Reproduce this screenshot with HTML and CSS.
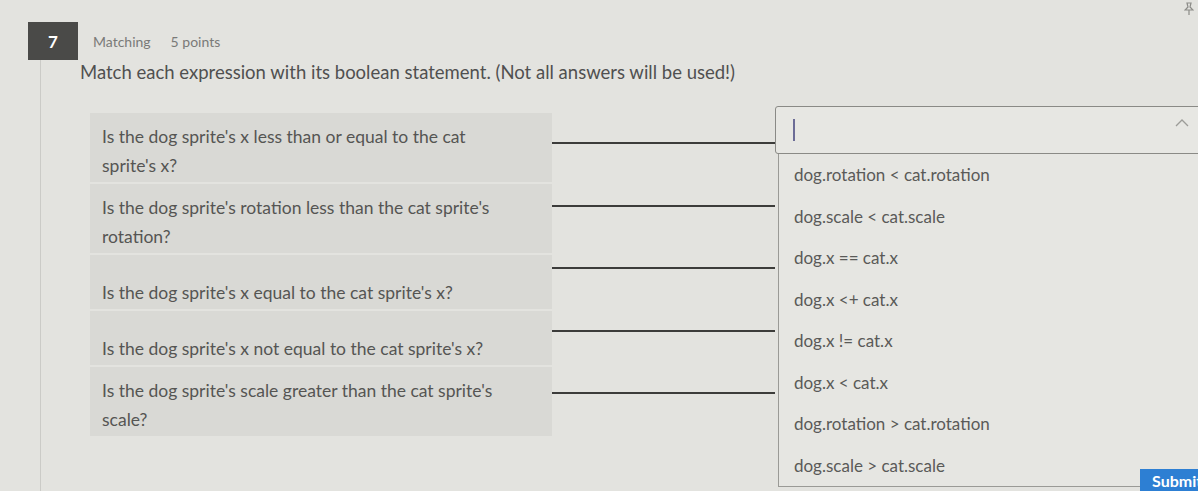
FILE: index.html
```html
<!DOCTYPE html>
<html lang="en">
<head>
  <meta charset="UTF-8">
  <meta name="viewport" content="width=device-width, initial-scale=1.0">
  <title>Question 7</title>
  <link rel="stylesheet" href="styles.css">
</head>
<body>
  <!-- pin icon, top right -->
  <svg class="pin" width="10" height="14" viewBox="0 0 10 14">
    <path d="M3 1h4l-1 4 3 3H1l3-3z M5 8v5" fill="none" stroke="#8c8c88" stroke-width="1.2"/>
  </svg>

  <div class="question">
    <div class="question-header">
      <span class="badge">7</span>
      <span class="qtype">Matching</span>
      <span class="points">5 points</span>
    </div>

    <div class="question-body">
      <p class="instruction">Match each expression with its boolean statement. (Not all answers will be used!)</p>

      <div class="match-area">
        <!-- Enunciados -->
        <div class="prompts">
          <div class="prompt">Is the dog sprite's x less than or equal to the cat sprite's x?</div>
          <div class="prompt">Is the dog sprite's rotation less than the cat sprite's rotation?</div>
          <div class="prompt">Is the dog sprite's x equal to the cat sprite's x?</div>
          <div class="prompt">Is the dog sprite's x not equal to the cat sprite's x?</div>
          <div class="prompt">Is the dog sprite's scale greater than the cat sprite's scale?</div>
        </div>

        <!-- Linhas de ligação -->
        <div class="wires">
          <div class="wire"></div>
          <div class="wire"></div>
          <div class="wire"></div>
          <div class="wire"></div>
          <div class="wire"></div>
        </div>

        <!-- Lista de respostas aberta -->
        <div class="combo">
          <div class="combo-input">
            <span class="caret"></span>
            <svg class="chevron" width="14" height="8" viewBox="0 0 14 8">
              <path d="M1 7l6-6 6 6" fill="none" stroke="#9c9c98" stroke-width="1.3"/>
            </svg>
          </div>
          <ul class="combo-list">
            <li>dog.rotation &lt; cat.rotation</li>
            <li>dog.scale &lt; cat.scale</li>
            <li>dog.x == cat.x</li>
            <li>dog.x &lt;+ cat.x</li>
            <li>dog.x != cat.x</li>
            <li>dog.x &lt; cat.x</li>
            <li>dog.rotation &gt; cat.rotation</li>
            <li>dog.scale &gt; cat.scale</li>
          </ul>
        </div>
      </div>
    </div>
  </div>

  <button class="submit">Submit</button>
</body>
</html>
```

FILE: styles.css
```css
body {
  font-family: Lato, "Open Sans", sans-serif;
  margin: 0;
  padding: 0;
  background-color: #e3e3df;
  color: #555;
  height: 491px;
  overflow: hidden;
  position: relative;
}
.pin {
  position: absolute;
  top: 2px;
  right: 4px;
}
.question {
  padding-top: 22px;
}
.question-header {
  display: flex;
  align-items: center;
  padding-left: 28px;
}
.badge {
  width: 50px;
  height: 38px;
  background: #4a4a48;
  color: #fff;
  font-weight: bold;
  font-size: 17px;
  display: flex;
  align-items: center;
  justify-content: center;
}
.qtype {
  margin-left: 15px;
  font-size: 14px;
  color: #7a7a78;
}
.points {
  margin-left: 20px;
  font-size: 14px;
  color: #7a7a78;
}
.question-body {
  margin-left: 40px;
  border-left: 1px solid #cbcbc7;
  padding-left: 39px;
  height: 431px;
}
.instruction {
  margin: 0;
  font-size: 18.5px;
  line-height: 24px;
  color: #505050;
  white-space: nowrap;
}

/* Area das ligações */
.match-area {
  display: flex;
  margin-top: 16px;
}
.prompts {
  width: 462px;
  flex-shrink: 0;
  margin-left: 10px;
  padding-top: 13px;
  display: flex;
  flex-direction: column;
  gap: 2px;
}
.prompt {
  background: #d9d9d5;
  font-size: 17.5px;
  line-height: 29px;
  padding: 9px 30px 2px 12px;
  min-height: 54px;
  box-sizing: border-box;
  display: flex;
  flex-direction: column;
  justify-content: flex-end;
  color: #555553;
}
.wires {
  width: 223px;
  flex-shrink: 0;
  padding-top: 42px;
}
.wire {
  height: 2px;
  background: #3c3c3a;
  margin-bottom: 60.5px;
}
.combo {
  width: 445px;
  flex-shrink: 0;
  margin-top: 6px;
}
.combo-input {
  height: 48px;
  box-sizing: border-box;
  border: 1px solid #8a8a86;
  border-radius: 3px;
  background: #e7e7e3;
  display: flex;
  align-items: center;
  justify-content: space-between;
  padding: 0 30px 0 17px;
}
.caret {
  width: 2px;
  height: 22px;
  background: #6c6c96;
}
.chevron {
  margin-top: -14px;
}
.combo-list {
  list-style: none;
  margin: 0 0 0 3px;
  padding: 0;
  border-left: 1px solid #9a9a96;
  border-bottom: 1px solid #9a9a96;
  background: #e6e6e2;
}
.combo-list li {
  height: 41.5px;
  line-height: 41.5px;
  padding-left: 15px;
  font-size: 17px;
  color: #5a5a58;
}
.submit {
  position: absolute;
  left: 1140px;
  bottom: 0;
  width: 90px;
  height: 22px;
  border: none;
  background: #2d7fd3;
  color: #fff;
  font-family: Lato, sans-serif;
  font-size: 16px;
  font-weight: bold;
  text-align: left;
  padding: 0 0 0 12px;
}
```
